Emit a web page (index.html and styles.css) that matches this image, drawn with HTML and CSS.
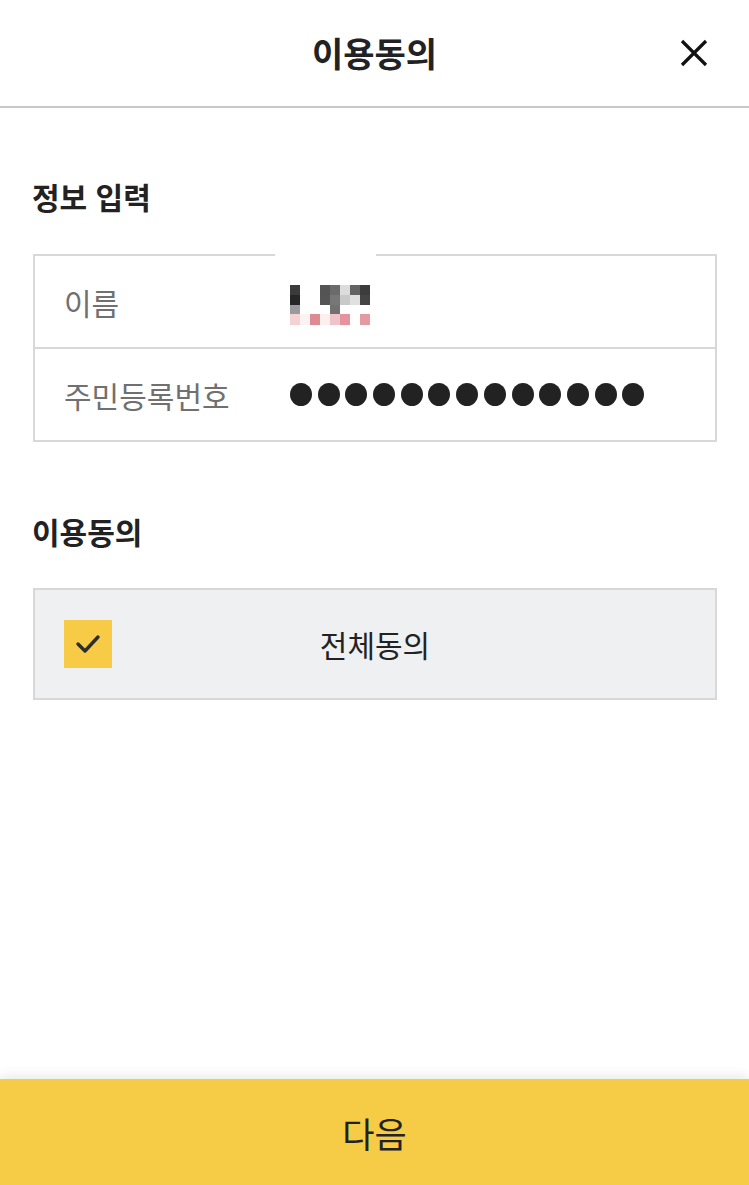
FILE: index.html
```html
<!DOCTYPE html>
<html lang="ko">
<head>
  <meta charset="UTF-8" />
  <meta name="viewport" content="width=device-width, initial-scale=1" />
  <title>이용동의</title>
  <link rel="stylesheet" href="styles.css">
</head>
<body>
  <div class="page">
    <header class="top-bar">
      <span></span>
      <h1>이용동의</h1>
      <button class="close" aria-label="닫기">
        <svg width="28" height="28" viewBox="0 0 28 28">
          <path d="M2 2 L26 26 M26 2 L2 26" stroke="#111" stroke-width="3.2" fill="none" />
        </svg>
      </button>
    </header>

    <main class="content">
      <h2 class="section-title">정보 입력</h2>
      <div class="info-table">
        <div class="row">
          <span class="label">이름</span>
          <svg class="name-pic" width="101" height="84" viewBox="0 0 101 84">
            <rect width="101" height="84" fill="#fff" />
            <rect x="15" y="33" width="10" height="10" fill="#3b3b3b" />
            <rect x="45" y="33" width="10" height="10" fill="#545454" />
            <rect x="55" y="33" width="10" height="10" fill="#6b6b6b" />
            <rect x="65" y="33" width="10" height="10" fill="#dcdcdc" />
            <rect x="75" y="33" width="10" height="10" fill="#646464" />
            <rect x="85" y="33" width="10" height="10" fill="#3c3c3c" />
            <rect x="15" y="43" width="10" height="10" fill="#262626" />
            <rect x="45" y="43" width="10" height="10" fill="#555555" />
            <rect x="55" y="43" width="10" height="10" fill="#777777" />
            <rect x="65" y="43" width="10" height="10" fill="#c9c9c9" />
            <rect x="75" y="43" width="10" height="10" fill="#e0e0e0" />
            <rect x="85" y="43" width="10" height="10" fill="#444444" />
            <rect x="15" y="53" width="10" height="9" fill="#9a9a9e" />
            <rect x="55" y="53" width="10" height="9" fill="#717171" />
            <rect x="15" y="62" width="10" height="11" fill="#f4d2d4" />
            <rect x="25" y="62" width="10" height="11" fill="#fbf3f3" />
            <rect x="35" y="62" width="10" height="11" fill="#dd8a90" />
            <rect x="45" y="62" width="10" height="11" fill="#fcefef" />
            <rect x="55" y="62" width="10" height="11" fill="#f0c3c8" />
            <rect x="65" y="62" width="10" height="11" fill="#e5949b" />
            <rect x="85" y="62" width="10" height="11" fill="#e39ba1" />
          </svg>
        </div>
        <div class="row">
          <span class="label">주민등록번호</span>
          <span class="dots">
            <i></i><i></i><i></i><i></i><i></i><i></i><i></i><i></i><i></i><i></i><i></i><i></i><i></i>
          </span>
        </div>
      </div>

      <h2 class="section-title agree-title">이용동의</h2>
      <label class="agree-all">
        <span class="check">
          <svg width="26" height="20" viewBox="0 0 26 20">
            <path d="M3 10 L10 17 L23 3" stroke="#2d2d2d" stroke-width="3.4" fill="none" stroke-linecap="round" stroke-linejoin="round" />
          </svg>
        </span>
        <span class="agree-text">전체동의</span>
        <span></span>
      </label>
    </main>

    <button class="next">다음</button>
  </div>
</body>
</html>
```

FILE: styles.css
```css
body {
  margin: 0;
  font-family: "Noto Sans CJK KR", "Noto Sans", sans-serif;
  color: #222;
  background: #fff;
}
.page {
  min-height: 100vh;
  display: flex;
  flex-direction: column;
}
.top-bar {
  height: 106px;
  border-bottom: 2px solid #c8c8c8;
  display: grid;
  grid-template-columns: 1fr auto 1fr;
  align-items: center;
}
.top-bar h1 {
  margin: 0;
  font-size: 34px;
  font-weight: 700;
  line-height: 40px;
  color: #222;
}
.close {
  justify-self: end;
  margin-right: 41px;
  padding: 0;
  border: none;
  background: none;
  width: 28px;
  height: 28px;
  display: flex;
  cursor: pointer;
}
.content {
  padding: 68px 32px 0 33px;
}
.section-title {
  margin: 0 0 38px -1px;
  font-size: 30px;
  font-weight: 700;
  line-height: 40px;
}
.agree-title {
  margin-top: 69px;
  margin-bottom: 37px;
}
.info-table {
  border: 2px solid #d8d8d8;
  position: relative;
}
.row {
  height: 91px;
  display: flex;
  align-items: center;
  padding-left: 29px;
}
.row + .row {
  border-top: 2px solid #d8d8d8;
}
.label {
  width: 226px;
  font-size: 30px;
  color: #707070;
}
.name-pic {
  position: absolute;
  left: 240px;
  top: -4px;
}
.dots {
  display: flex;
  gap: 5.7px;
}
.dots i {
  width: 22px;
  height: 23px;
  border-radius: 50%;
  background: #222;
}
.agree-all {
  height: 108px;
  border: 2px solid #d8d8d8;
  background: #eff0f2;
  display: grid;
  grid-template-columns: 1fr auto 1fr;
  align-items: center;
  cursor: pointer;
}
.check {
  margin-left: 29px;
  width: 48px;
  height: 48px;
  background: #f7cb46;
  display: flex;
  align-items: center;
  justify-content: center;
}
.agree-text {
  font-size: 30px;
  color: #222;
}
.next {
  margin-top: auto;
  height: 106px;
  width: 100%;
  border: none;
  background: #f6cb45;
  box-shadow: 0 -4px 10px rgba(0,0,0,0.08);
  font-family: inherit;
  font-size: 35px;
  color: #222;
  cursor: pointer;
}
```
